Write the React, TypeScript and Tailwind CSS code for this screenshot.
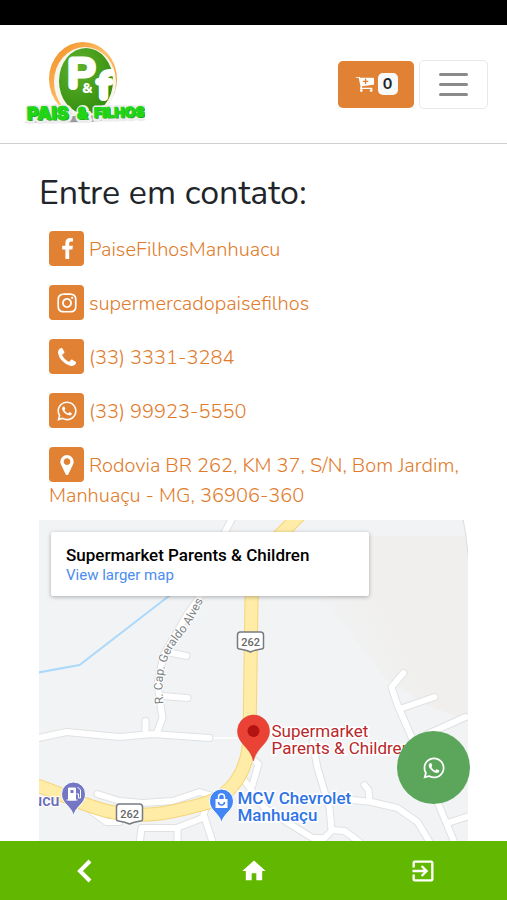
import type { ReactNode } from "react";
import { FaInstagram, FaWhatsapp } from "react-icons/fa";
import { MdExitToApp, MdHome } from "react-icons/md";

interface ContactLinkProps {
  href: string;
  icon: ReactNode;
  children: ReactNode;
}

const CartPlusIcon = () => (
  <svg viewBox="0 256 1728 1344" className="h-[15px] w-[19px]" fill="currentColor" aria-hidden="true">
    <path d="M1216 640q0-26-19-45t-45-19h-128v-128q0-26-19-45t-45-19-45 19-19 45v128h-128q-26 0-45 19t-19 45 19 45 45 19h128v128q0 26 19 45t45 19 45-19 19-45v-128h128q26 0 45-19t19-45zm-512 832q0 53-37.5 90.5t-90.5 37.5-90.5-37.5-37.5-90.5 37.5-90.5 90.5-37.5 90.5 37.5 37.5 90.5zm896 0q0 53-37.5 90.5t-90.5 37.5-90.5-37.5-37.5-90.5 37.5-90.5 90.5-37.5 90.5 37.5 37.5 90.5zm128-1088v512q0 24-16 42.5t-41 21.5l-1044 122q1 7 4.5 21.5t6 26.5 2.5 22q0 16-24 64h920q26 0 45 19t19 45-19 45-45 19h-1024q-26 0-45-19t-19-45q0-14 11-39.5t29.5-59.5 20.5-38l-177-823h-204q-26 0-45-19t-19-45 19-45 45-19h256q16 0 28.5 6.5t20 15.5 13 24.5 7.5 26.5 5.5 29.5 4.5 25.5h1201q26 0 45 19t19 45z" />
  </svg>
);

const FacebookIcon = () => (
  <svg viewBox="0 0 959 1664" className="h-[21px] w-3" fill="currentColor" aria-hidden="true">
    <path d="M959 12v264h-157q-86 0-116 36t-30 108v189h293l-39 296h-254v759h-306v-759h-255v-296h255v-218q0-186 104-288.5t277-102.5q147 0 228 12z" />
  </svg>
);

const PhoneIcon = () => (
  <svg viewBox="0 128 1408 1408" className="size-[18px]" fill="currentColor" aria-hidden="true">
    <path d="M1408 1240q0 27-10 70.5t-21 68.5q-21 50-122 106-94 51-186 51-27 0-53-3.5t-57-12.5-47-14.5-55.5-20.5-49-18q-98-35-175-83-127-79-264-216t-216-264q-48-77-83-175-3-9-18-49t-20.5-55.5-14.5-47-12.5-57-3.5-53q0-92 51-186 56-101 106-122 25-11 68.5-21t70.5-10q14 0 21 3 18 6 53 76 11 19 30 54t35 63.5 31 53.5q3 4 17.5 25t21.5 35.5 7 28.5q0 20-28.5 50t-62 55-62 53-28.5 46q0 9 5 22.5t8.5 20.5 14 24 11.5 19q76 137 174 235t235 174q2 1 19 11.5t24 14 20.5 8.5 22.5 5q18 0 46-28.5t53-62 55-62 50-28.5q14 0 28.5 7t35.5 21.5 25 17.5q25 15 53.5 31t63.5 35 54 30q70 35 76 53 3 7 3 21z" />
  </svg>
);

const MarkerIcon = () => (
  <svg viewBox="0 128 1024 1536" className="h-5 w-[14px]" fill="currentColor" aria-hidden="true">
    <path d="M768 640q0-106-75-181t-181-75-181 75-75 181 75 181 181 75 181-75 75-181zm256 0q0 109-33 179l-364 774q-16 33-47.5 52t-67.5 19-67.5-19-46.5-52l-365-774q-33-70-33-179 0-212 150-362t362-150 362 150 150 362z" />
  </svg>
);

const contacts = [
  { href: "#facebook", icon: <FacebookIcon />, text: "PaiseFilhosManhuacu" },
  { href: "#instagram", icon: <FaInstagram size={22} />, text: "supermercadopaisefilhos" },
  { href: "tel:3333313284", icon: <PhoneIcon />, text: "(33) 3331-3284" },
  { href: "#whatsapp", icon: <FaWhatsapp size={22} />, text: "(33) 99923-5550" },
  {
    href: "#mapa",
    icon: <MarkerIcon />,
    text: "Rodovia BR 262, KM 37, S/N, Bom Jardim, Manhuaçu - MG, 36906-360",
  },
];

// white streets, drawn twice: grey casing first and then the fill
const streets = [
  "M39 738 L67 732 L120 737 L153 734 L210 738",
  "M146 734 V721",
  "M157 734 L163 718 L161 705 L158 684 L164 655 L188 614 L205 590 L226 531 L235 514",
  "M168 652 L187 656",
  "M163 696 L188 698",
  "M98 794 L120 801 L143 803 L173 801 L200 792 L210 795",
  "M93 812 L107 822 L120 822",
  "M140 845 L142 828 L177 828 L203 818 L208 802",
  "M178 828 V845",
  "M205 817 L214 845",
  "M254 760 L259 764 L253 785",
  "M243 778 L265 808 L292 825 L313 838 L325 838 L333 830 L345 831 L360 842",
  "M313 742 L318 768 L330 808 L332 830",
  "M335 798 L372 802 L398 808 L418 822 L432 845",
  "M370 801 L369 790 L365 785",
  "M404 673 L392 687 L398 705 L412 737 L438 802 L456 845",
  "M403 708 L435 697",
  "M426 735 L466 717",
  "M448 823 L473 815",
];

const highway =
  "M304 511 L270 546 Q256 564 252 600 L250 735 C249 772 232 795 207 803 C168 814 145 818 112 812 C84 806 66 795 36 785";

const Logo = () => (
  <svg viewBox="0 0 124 88" className="h-[88px] w-[124px]" role="img" aria-label="Pais & Filhos">
    <defs>
      <linearGradient id="ring" x1="0" y1="0" x2="1" y2="1">
        <stop offset="0" stopColor="#f08a1c" />
        <stop offset="0.5" stopColor="#ffc06a" />
        <stop offset="1" stopColor="#ee8a20" />
      </linearGradient>
      <radialGradient id="disc" cx="0.35" cy="0.3" r="0.8">
        <stop offset="0" stopColor="#5fb22a" />
        <stop offset="1" stopColor="#2f8a0c" />
      </radialGradient>
    </defs>
    <ellipse cx="62" cy="39" rx="34" ry="37" fill="url(#ring)" />
    <ellipse cx="64" cy="42" rx="31" ry="35" fill="#f7f6ee" />
    <ellipse cx="65" cy="41" rx="27" ry="33" fill="url(#disc)" />
    <path d="M2 83 L60 75 L118 77 L70 82 Z" fill="#555" opacity="0.6" />
    <g fill="#fff" stroke="#fff" strokeLinejoin="round" fontFamily="Nunito, Lato, sans-serif" fontWeight="900">
      <text x="45" y="49" fontSize="45" strokeWidth="1">
        P
      </text>
      <text x="75" y="60" fontSize="41" strokeWidth="2">
        f
      </text>
      <text x="61" y="53" fontSize="14" stroke="none">
        &amp;
      </text>
    </g>
    <g transform="rotate(-1 60 76)" strokeLinejoin="round" fontFamily="Inter, sans-serif" fontWeight="900">
      <g fontSize="18" fill="#238a16" stroke="#ededed" strokeWidth="6" paintOrder="stroke">
        <text x="7" y="80">PAIS</text>
        <text x="57" y="80" fontSize="16">&amp;</text>
        <text x="74" y="79" fontSize="14">FILHOS</text>
      </g>
      <g fontSize="18" fill="#20d416" stroke="#20d416" strokeWidth="1">
        <text x="6" y="79">PAIS</text>
        <text x="56" y="79" fontSize="16">&amp;</text>
        <text x="73" y="78" fontSize="14">FILHOS</text>
      </g>
    </g>
  </svg>
);

const Shield = ({ x, y }: { x: number; y: number }) => (
  <g transform={`translate(${x} ${y})`}>
    <path
      d="M-10 -10 H10 Q13 -10 13 -7 V5 Q13 7 11 7 Q4 8 0 10 Q-4 8 -11 7 Q-13 7 -13 5 V-7 Q-13 -10 -10 -10 Z"
      fill="#fff"
      stroke="#777b80"
      strokeWidth="1.5"
    />
    <text y="4" textAnchor="middle" fontSize="11" fontWeight="500" fill="#666">
      262
    </text>
  </g>
);

const MapDrawing = () => (
  <svg
    viewBox="39 520 430 321"
    preserveAspectRatio="xMidYMin slice"
    className="absolute inset-0 h-full w-full"
    fontFamily="Roboto, sans-serif"
    aria-hidden="true"
  >
    <defs>
      <linearGradient id="terrain" x1="0" y1="0.6" x2="0.4" y2="0.35">
        <stop offset="0" stopColor="#f1f3f4" />
        <stop offset="1" stopColor="#f0efed" />
      </linearGradient>
    </defs>
    <rect x="0" y="500" width="600" height="400" fill="#f1f3f4" />
    <path d="M330 536 H474 V722 L428 706 L385 678 L325 600 Z" fill="url(#terrain)" />
    <path d="M463 517 Q467 535 469 560 L474 560 V517 Z" fill="#fff" stroke="#dadcde" />
    <path d="M36 673 L80 665 L172 594" fill="none" stroke="#acd9fb" strokeWidth="2" />
    <path d="M208 738 H240" stroke="#fff" strokeWidth="1.5" />
    <g fill="none" strokeLinecap="round" strokeLinejoin="round">
      <g stroke="#dfe1e3" strokeWidth="8">
        {streets.map((d) => (
          <path key={d} d={d} />
        ))}
      </g>
      <g stroke="#fff" strokeWidth="6">
        {streets.map((d) => (
          <path key={d} d={d} />
        ))}
      </g>
      <path d={highway} stroke="#f5d57a" strokeWidth="14" />
      <path d={highway} stroke="#ffeca6" strokeWidth="12" />
    </g>
    <Shield x={251} y={642} />
    <Shield x={130} y={814} />

    <path id="geraldo" d="M164 704 C160 668 168 652 187 630 C200 612 208 590 214 575" fill="none" />
    <text fontSize="12" fill="#7c7f83" stroke="#fff" strokeWidth="2" paintOrder="stroke">
      <textPath href="#geraldo">R. Cap. Geraldo Alves de</textPath>
    </text>

    {/* fuel station */}
    <path d="M74 816 C72 806 62 804 62 794 A12 12 0 1 1 86 794 C86 804 76 806 74 816 Z" fill="#7377c4" stroke="#fff" />
    <path d="M69 788 H76 V800 H69 Z M67 800 H78" fill="#fff" stroke="#fff" />
    <path d="M71 790 H74 V793 H71 Z" fill="#7377c4" />
    <path d="M77 794 H79 V798 H81 V790 L78 787" fill="none" stroke="#fff" />
    <text x="60" y="806" textAnchor="end" fontSize="16" fontWeight="500" fill="#686bb8" stroke="#fff" strokeWidth="2" paintOrder="stroke">
      ucu
    </text>

    {/* dealership */}
    <path d="M222 823 C220 813 210 811 210 801 A12 12 0 1 1 234 801 C234 811 224 813 222 823 Z" fill="#4285f4" stroke="#fff" />
    <path d="M216 799 H228 V808 H216 Z" fill="#fff" />
    <path d="M219 799 V797 A3 3 0 0 1 225 797 V799" fill="none" stroke="#fff" strokeWidth="1.5" />
    <path d="M219 802 A3 3 0 0 0 225 802" fill="none" stroke="#4285f4" strokeWidth="1.5" />
    <g fontSize="17" fontWeight="500" fill="#2f74e6" stroke="#fff" strokeWidth="3" paintOrder="stroke">
      <text x="238" y="804">MCV Chevrolet</text>
      <text x="238" y="821">Manhuaçu</text>
    </g>

    {/* store */}
    <path d="M254 761 C251 747 238 744 238 731 A16 16 0 1 1 270 731 C270 744 257 747 254 761 Z" fill="#ea4335" stroke="#d23a2e" strokeWidth="0.5" />
    <circle cx="254" cy="731" r="6" fill="#b31412" />
    <g fontSize="17" fill="#b9282b" stroke="#fff" strokeWidth="3" paintOrder="stroke">
      <text x="272" y="737">Supermarket</text>
      <text x="272" y="754">Parents &amp; Children</text>
    </g>
  </svg>
);

const ContactLink = ({ href, icon, children }: ContactLinkProps) => (
  <a href={href} className="block text-[20px] leading-[30px] font-light text-[#df7b2b]">
    <span className="-mt-2 mr-[5px] -mb-[3px] inline-flex size-[35px] items-center justify-center rounded-sm bg-[#e08134] align-middle text-white">
      {icon}
    </span>
    {children}
  </a>
);

export default function App() {
  return (
    <div className="flex min-h-screen flex-col bg-white font-['Nunito','Lato',sans-serif] text-[#212529]">
      <div className="h-[25px] bg-black" />
      <header className="flex h-[119px] items-center justify-between border-b border-[#cfcfcf] pr-[19px] pl-[21px]">
        <a href="#inicio">
          <Logo />
        </a>
        <div className="flex items-center gap-[5px]">
          <button
            type="button"
            aria-label="Carrinho"
            className="flex h-[47px] w-[76px] items-center justify-center gap-1 rounded-[5px] bg-[#e08134] text-white"
          >
            <CartPlusIcon />
            <span className="flex h-[22px] w-5 items-center justify-center rounded-[5px] bg-[#f8f9fa] text-[16px] font-bold text-[#212529]">
              0
            </span>
          </button>
          <button
            type="button"
            aria-label="Menu"
            className="flex h-[49px] w-[69px] flex-col items-center justify-center gap-[7px] rounded-[5px] border border-[#e8e8e8]"
          >
            <span className="h-[3px] w-[29px] rounded-xs bg-[#8a8a8a]" />
            <span className="h-[3px] w-[29px] rounded-xs bg-[#8a8a8a]" />
            <span className="h-[3px] w-[29px] rounded-xs bg-[#8a8a8a]" />
          </button>
        </div>
      </header>

      <main className="flex flex-1 flex-col px-[39px] pt-7">
        <h1 className="text-[34px] leading-[42px]">Entre em contato:</h1>
        <ul className="mt-[21px] mb-[9px] space-y-6 pl-[10px]">
          {contacts.map((item) => (
            <li key={item.href}>
              <ContactLink href={item.href} icon={item.icon}>
                {item.text}
              </ContactLink>
            </li>
          ))}
        </ul>
        <section id="mapa" className="relative min-h-80 flex-1 overflow-hidden font-['Roboto',sans-serif]">
          <MapDrawing />
          <div className="absolute top-3 left-3 h-16 w-[318px] rounded-xs bg-white px-[15px] pt-3 shadow-[0_1px_4px_rgba(0,0,0,0.3)]">
            <h2 className="text-[17px] leading-[22px] font-medium text-black">Supermarket Parents &amp; Children</h2>
            <a href="#mapa" className="block text-[15px] leading-[18px] text-[#4a8cf0]">
              View larger map
            </a>
          </div>
        </section>
      </main>

      <a
        href="#whatsapp"
        aria-label="WhatsApp"
        className="fixed right-[37px] bottom-24 flex size-[73px] items-center justify-center rounded-full bg-[#5ca65c] text-white"
      >
        <FaWhatsapp size={24} />
      </a>

      <nav className="sticky bottom-0 grid h-[59px] grid-cols-3 bg-[#62b800] text-white">
        <button type="button" aria-label="Voltar" className="flex items-center justify-center">
          <svg viewBox="0 0 15 24" className="h-6 w-[15px]" fill="none" stroke="currentColor" strokeWidth="4">
            <path d="M13 2 L3 12 L13 22" />
          </svg>
        </button>
        <button type="button" aria-label="Início" className="flex items-center justify-center">
          <MdHome size={28} />
        </button>
        <button type="button" aria-label="Sair" className="flex items-center justify-center">
          <MdExitToApp size={28} />
        </button>
      </nav>
    </div>
  );
}
